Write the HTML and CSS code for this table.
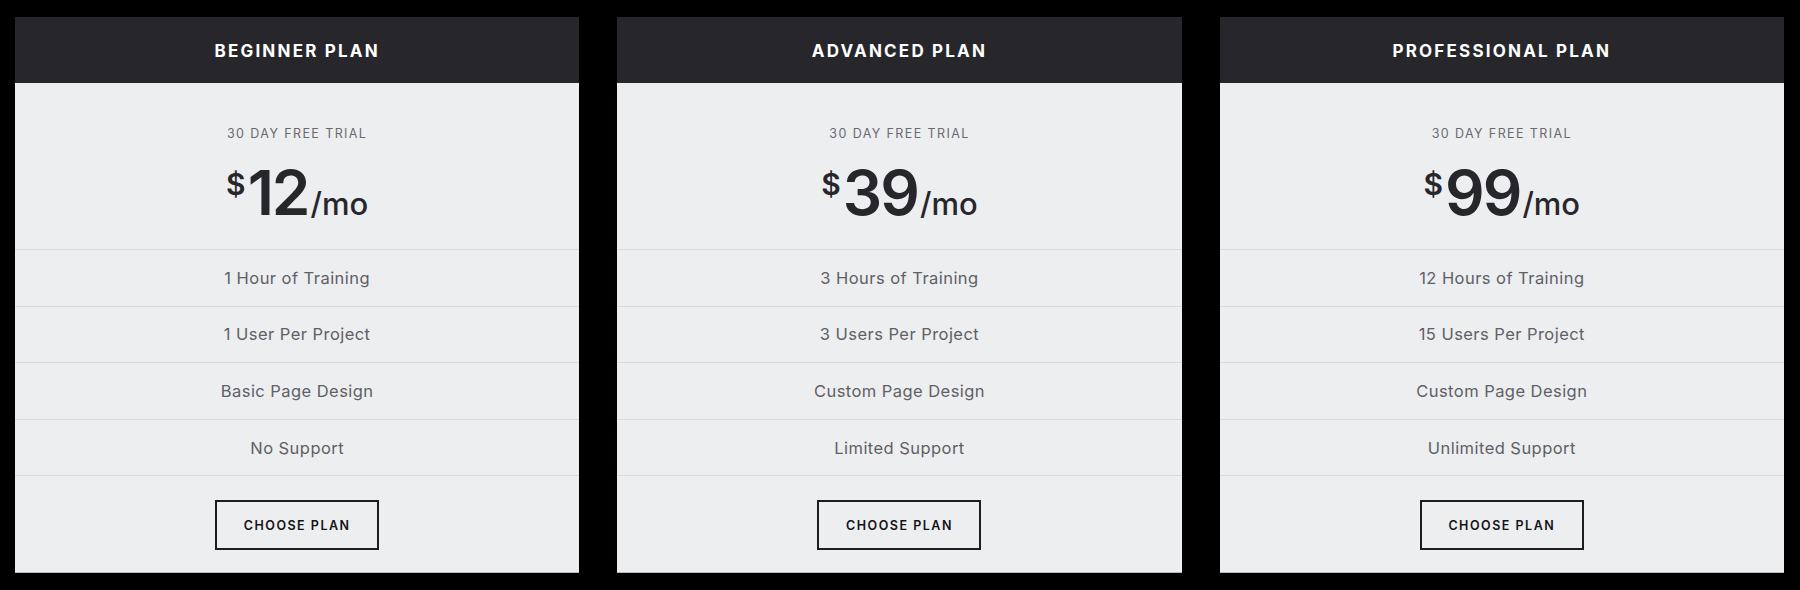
FILE: index.html
```html
<!DOCTYPE html>
<html lang="en">
<head>
<meta charset="utf-8">
<title>Pricing</title>
<link rel="stylesheet" href="styles.css">
</head>
<body>
<main class="plans">
  <section class="card">
    <header class="head">BEGINNER PLAN</header>
    <div class="price-box">
      <div class="trial">30 DAY FREE TRIAL</div>
      <div class="price"><span class="cur">$</span><span class="amt">12</span><span class="per">/mo</span></div>
    </div>
    <ul class="features">
      <li>1 Hour of Training</li>
      <li>1 User Per Project</li>
      <li>Basic Page Design</li>
      <li>No Support</li>
    </ul>
    <div class="action"><a class="btn" href="#">CHOOSE PLAN</a></div>
  </section>
  <section class="card">
    <header class="head">ADVANCED PLAN</header>
    <div class="price-box">
      <div class="trial">30 DAY FREE TRIAL</div>
      <div class="price"><span class="cur">$</span><span class="amt">39</span><span class="per">/mo</span></div>
    </div>
    <ul class="features">
      <li>3 Hours of Training</li>
      <li>3 Users Per Project</li>
      <li>Custom Page Design</li>
      <li>Limited Support</li>
    </ul>
    <div class="action"><a class="btn" href="#">CHOOSE PLAN</a></div>
  </section>
  <section class="card">
    <header class="head">PROFESSIONAL PLAN</header>
    <div class="price-box">
      <div class="trial">30 DAY FREE TRIAL</div>
      <div class="price"><span class="cur">$</span><span class="amt">99</span><span class="per">/mo</span></div>
    </div>
    <ul class="features">
      <li>12 Hours of Training</li>
      <li>15 Users Per Project</li>
      <li>Custom Page Design</li>
      <li>Unlimited Support</li>
    </ul>
    <div class="action"><a class="btn" href="#">CHOOSE PLAN</a></div>
  </section>
</main>
</body>
</html>
```

FILE: styles.css
```css
* { box-sizing: border-box; }

html, body {
  margin: 0;
  padding: 0;
  background: #000;
}

body {
  font-family: Inter, "Noto Sans", "Liberation Sans", sans-serif;
  width: 1800px;
  height: 590px;
  overflow: hidden;
}

.plans {
  display: grid;
  grid-template-columns: repeat(3, 1fr);
  gap: 38px;
  padding: 17px 16px 0 15px;
}

.card {
  background: #edeef0;
  border-bottom: 1px solid #b9b9bc;
  display: flex;
  flex-direction: column;
}

.head {
  height: 66px;
  background: #27272b;
  color: #fff;
  display: flex;
  align-items: center;
  justify-content: center;
  font-size: 17px;
  font-weight: 700;
  letter-spacing: 2.2px;
  padding-top: 2px;
}

.price-box {
  height: 166px;
  display: flex;
  flex-direction: column;
  align-items: center;
  padding-top: 41px;
}

.trial {
  font-size: 12.5px;
  line-height: 20px;
  letter-spacing: 1.4px;
  color: #6a6a6f;
  font-weight: 400;
}

.price {
  margin-top: 18px;
  line-height: 62px;
  height: 62px;
  color: #27272b;
  white-space: nowrap;
}

.cur {
  font-size: 30px;
  line-height: 44px;
  vertical-align: top;
  font-weight: 600;
  margin-right: 2px;
}

.amt {
  font-size: 62px;
  font-weight: 600;
  letter-spacing: -2px;
}

.per {
  font-size: 31px;
  font-weight: 500;
  margin-left: 2px;
}

.features {
  list-style: none;
  margin: 0;
  padding: 0;
}

.features li {
  height: 56.6px;
  border-top: 1px solid #d9d9dc;
  display: flex;
  align-items: center;
  justify-content: center;
  font-size: 16.5px;
  color: #606065;
  letter-spacing: 0.45px;
}

.action {
  border-top: 1px solid #d9d9dc;
  display: flex;
  justify-content: center;
  padding: 24px 0 22px;
}

.btn {
  width: 164px;
  height: 50px;
  border: 2px solid #1d1d20;
  display: flex;
  align-items: center;
  justify-content: center;
  color: #141416;
  text-decoration: none;
  font-size: 12.5px;
  font-weight: 600;
  letter-spacing: 1.5px;
}
```
